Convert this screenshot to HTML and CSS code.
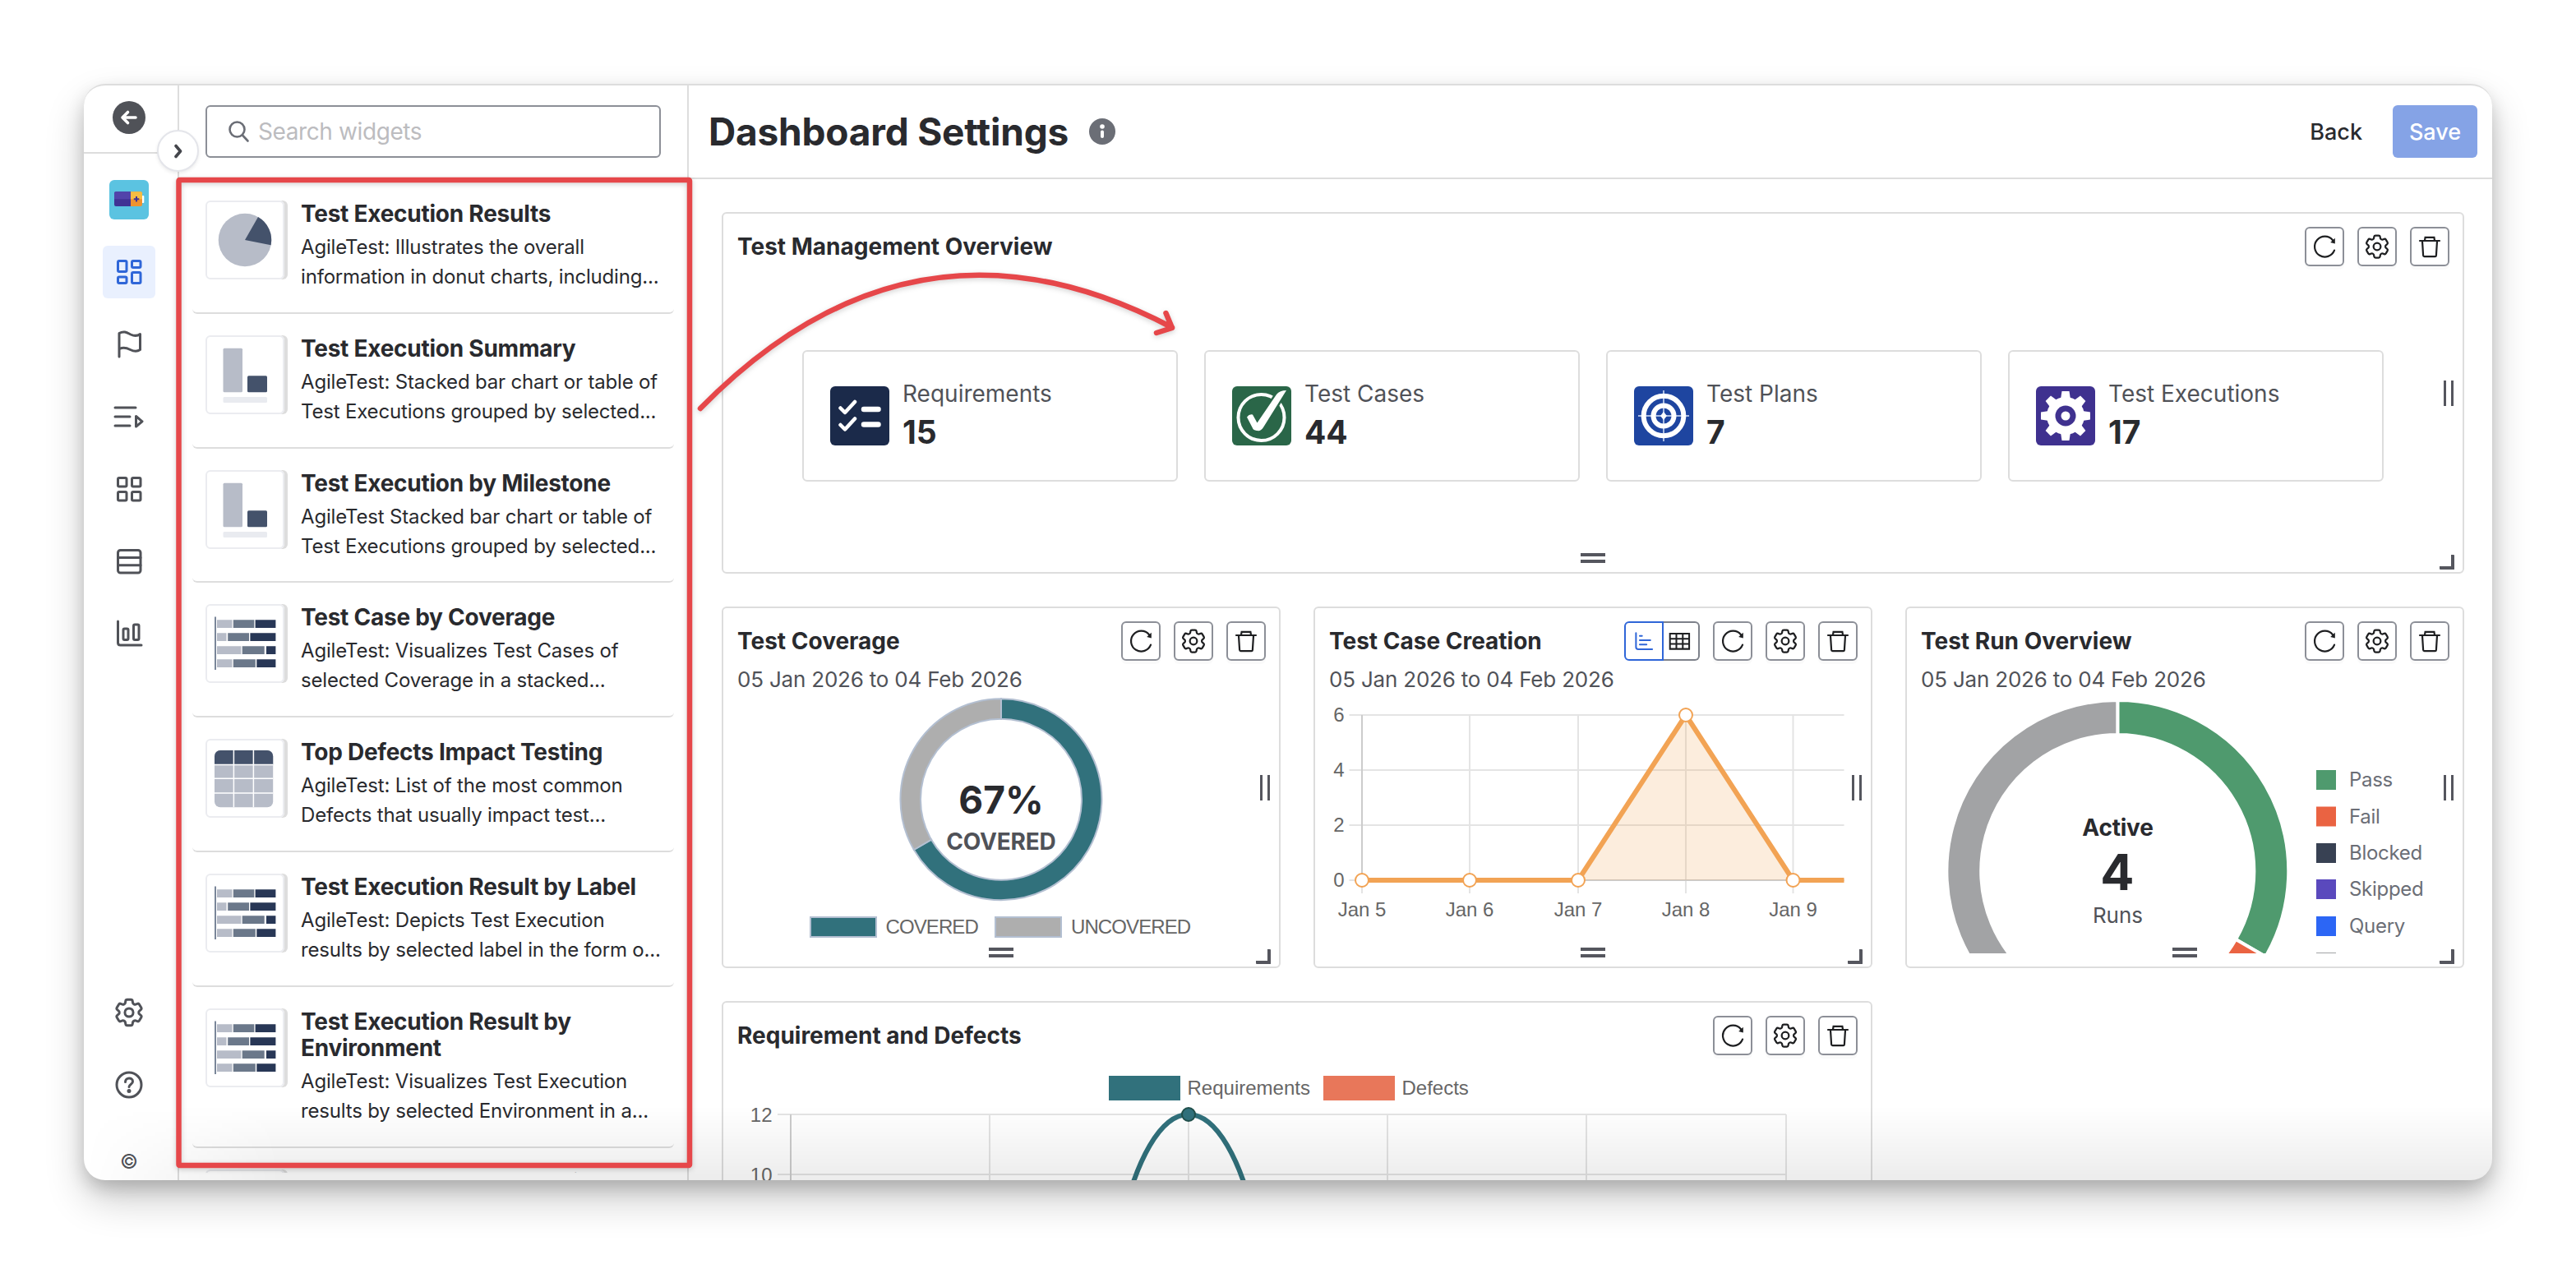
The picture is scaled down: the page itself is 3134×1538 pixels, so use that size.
FILE: index.html
```
<!DOCTYPE html>
<html lang="en">
<head>
  <title>Dashboard Settings</title>
  <meta charset="UTF-8">
  <meta name="viewport" content="width=device-width, initial-scale=1.0">
  <link rel="stylesheet" href="styles.css">
</head>
<body>
  <!-- Shared icons -->
  <svg class="sprite" width="0" height="0">
    <symbol id="gear" viewBox="0 0 24 24">
      <path d="M9.594 3.94c.09-.542.56-.94 1.11-.94h2.593c.55 0 1.02.398 1.11.94l.213 1.281c.063.374.313.686.645.87.074.04.147.083.22.127.325.196.72.257 1.075.124l1.217-.456a1.125 1.125 0 0 1 1.37.49l1.296 2.247a1.125 1.125 0 0 1-.26 1.431l-1.003.827c-.293.241-.438.613-.43.992a7.723 7.723 0 0 1 0 .255c-.008.378.137.75.43.991l1.004.827c.424.35.534.955.26 1.43l-1.298 2.247a1.125 1.125 0 0 1-1.369.491l-1.217-.456c-.355-.133-.75-.072-1.076.124a6.47 6.47 0 0 1-.22.128c-.331.183-.581.495-.644.869l-.213 1.281c-.09.543-.56.94-1.11.94h-2.594c-.55 0-1.019-.398-1.11-.94l-.213-1.281c-.062-.374-.312-.686-.644-.87a6.52 6.52 0 0 1-.22-.127c-.325-.196-.72-.257-1.076-.124l-1.217.456a1.125 1.125 0 0 1-1.369-.49l-1.297-2.247a1.125 1.125 0 0 1 .26-1.431l1.004-.827c.292-.24.437-.613.43-.991a6.932 6.932 0 0 1 0-.255c.007-.38-.138-.751-.43-.992l-1.004-.827a1.125 1.125 0 0 1-.26-1.43l1.297-2.247a1.125 1.125 0 0 1 1.37-.491l1.216.456c.356.133.751.072 1.076-.124.072-.044.146-.086.22-.128.332-.183.582-.495.644-.869l.214-1.28Z"/>
      <circle cx="12" cy="12" r="2.9"/>
    </symbol>
    <symbol id="refresh" viewBox="2 2 44 44">
      <path d="M36 28.6A12.4 12.4 0 1 1 34 16.2"/>
      <path class="solid" d="M36.8 13.8v6.6l-5.6-1.4z"/>
    </symbol>
    <symbol id="trash" viewBox="2 2 44 44">
      <path d="M12 17h24M18 16.500l.6-3.700h10.800l.6 3.700M15 17.500l1.100 17.300q.1 1.400 1.400 1.400h13q1.300 0 1.400-1.400l1.100-17.300"/>
    </symbol>
    <symbol id="thumb-pie" viewBox="0 0 92 92">
      <circle cx="46" cy="46" r="32.300" fill="#b7bcc8"/>
      <path d="M46 46 62 18A32.300 32.300 0 0 1 77.600 52.300z" fill="#44526b"/>
    </symbol>
    <symbol id="thumb-bar" viewBox="0 0 92 92">
      <rect x="19.500" y="13.700" width="23.500" height="53.500" rx="1.500" fill="#b7bcc8"/>
      <rect x="49" y="47.300" width="24" height="20" rx="1.500" fill="#44526b"/>
      <rect x="19.500" y="73" width="53.500" height="7" rx="1.500" fill="#e9ebf0"/>
    </symbol>
    <symbol id="thumb-stacked" viewBox="2 2 92 92">
      <path d="M12 15.500v64.500" stroke="#7a8699" stroke-width="2"/>
      <path fill="#b7bcc8" d="M14 19.200h18.500v9.800H14zM14 35.200h11.500V45H14zM14 51.200h29.400V61H14zM14 67.200h18.500V77H14z"/>
      <path fill="#6b788a" d="M33.800 19.200h25.500v9.800H33.800zM27.200 35.200H53V45H27.200zM44.700 51.200h27V61h-27zM33.800 67.200h27V77h-27z"/>
      <path fill="#283756" d="M60.600 19.200h24.800v9.800H60.600zM54.400 35.200h31V45h-31zM74 51.200h11.400V61H74zM62.300 67.200h23.100V77H62.300z"/>
    </symbol>
    <symbol id="thumb-table" viewBox="2 2 92 92">
      <clipPath id="tbl"><rect x="11" y="14" width="71.200" height="69.300" rx="7"/></clipPath>
      <g clip-path="url(#tbl)">
        <rect x="11" y="14" width="72" height="70" fill="#b7bcc8"/>
        <rect x="11" y="14" width="72" height="17" fill="#44526b"/>
        <path d="M34.400 14v70M58.400 14v70M11 31.500h72M11 48.300h72M11 66h72" stroke="#fff" stroke-width="1.500"/>
      </g>
    </symbol>
  </svg>

  <div class="window">
    <nav class="sidebar">
      <div class="sidebar-head">
        <svg width="40" height="40" viewBox="0 0 40 40">
          <circle cx="20" cy="20" r="20" fill="#505258"/>
          <path d="M28 20H12.500M18.500 13.500 12 20l6.500 6.500" fill="none" stroke="#fff" stroke-width="3.600" stroke-linecap="round" stroke-linejoin="round"/>
        </svg>
      </div>
      <div class="nav-list">
        <div class="nav-item">
          <svg width="48" height="48" viewBox="0 0 48 48">
            <rect width="48" height="48" rx="6" fill="#5bc3e1"/>
            <rect x="38" y="19" width="4.300" height="9" rx="1" fill="#fff"/>
            <path d="M8 14.300h18V32H8q-2 0-2-2V16.300q0-2 2-2z" fill="#403294"/>
            <path d="M8 14.300h18v8.900H6v-6.900q0-2 2-2z" fill="#5243aa"/>
            <path d="M26 14.300h12q2 0 2 2V30q0 2-2 2H26z" fill="#f0932f"/>
            <path d="M26 14.300h12q2 0 2 2v6.900H26z" fill="#f6bd43"/>
            <path d="M33 20v6.500M29.800 23.200h6.500" stroke="#403294" stroke-width="2"/>
          </svg>
        </div>
        <div class="nav-item active">
          <svg class="nav-icon" viewBox="0 0 64 64">
            <rect x="18.500" y="18.500" width="10.500" height="13" rx="1.500"/>
            <rect x="35.500" y="18.500" width="10.500" height="8" rx="1.500"/>
            <rect x="18.500" y="38" width="10.500" height="7.500" rx="1.500"/>
            <rect x="35.500" y="32.500" width="10.500" height="13" rx="1.500"/>
          </svg>
        </div>
        <div class="nav-item">
          <svg class="nav-icon" viewBox="0 0 64 64"><path d="M20 47V18.500c6-3.500 10-.5 14 1.500 4 1.800 8 2 11.500-.5v19c-3.500 2.500-8 2-12 0-4-2-8-3.500-13-1"/></svg>
        </div>
        <div class="nav-item">
          <svg class="nav-icon" viewBox="0 0 64 64"><path d="M15 21h25M15 32h18M15 43h18M40.500 31.500v12.500l7.500-6.200z"/></svg>
        </div>
        <div class="nav-item">
          <svg class="nav-icon" viewBox="0 0 64 64">
            <rect x="18.500" y="18.500" width="10.500" height="10.500" rx="1.500"/>
            <rect x="35.500" y="18.500" width="10.500" height="10.500" rx="1.500"/>
            <rect x="18.500" y="35.500" width="10.500" height="10.500" rx="1.500"/>
            <rect x="35.500" y="35.500" width="10.500" height="10.500" rx="1.500"/>
          </svg>
        </div>
        <div class="nav-item">
          <svg class="nav-icon" viewBox="0 0 64 64"><rect x="18.500" y="18.500" width="27.500" height="27.500" rx="3"/><path d="M18.500 27.500H46M18.500 36.800H46"/></svg>
        </div>
        <div class="nav-item">
          <svg class="nav-icon" viewBox="0 0 64 64"><path d="M18.500 17v26q0 3 3 3H47"/><rect x="25" y="26" width="6" height="13.500" rx="1.500"/><rect x="37.500" y="21" width="6.500" height="18.500" rx="1.500"/></svg>
        </div>
      </div>
      <div class="nav-foot">
        <div class="nav-item"><svg class="nav-gear"><use href="#gear"/></svg></div>
        <div class="nav-item">
          <svg class="nav-icon" viewBox="0 0 64 64"><circle cx="32" cy="32" r="15"/><path d="M27.500 28.500c0-6 9-6 9-.5 0 3.500-4.500 3.500-4.500 6.500"/><circle class="dot" cx="32" cy="39.500" r="1"/></svg>
        </div>
        <div class="copyright">©</div>
      </div>
    </nav>

    <aside class="widgets">
      <div class="search-wrap">
        <div class="search">
          <svg width="26" height="28" viewBox="0 0 26 28"><circle cx="10.500" cy="11.500" r="9" /><path d="M17 18.500l6.500 7"/></svg>
          <span>Search widgets</span>
        </div>
      </div>
      <div class="widget-list">
        <div class="widget">
          <div class="thumb"><svg><use href="#thumb-pie"/></svg></div>
          <div>
            <h3>Test Execution Results</h3>
            <p>AgileTest: Illustrates the overall<br>information in donut charts, including...</p>
          </div>
        </div>
        <div class="widget">
          <div class="thumb"><svg><use href="#thumb-bar"/></svg></div>
          <div>
            <h3>Test Execution Summary</h3>
            <p>AgileTest: Stacked bar chart or table of<br>Test Executions grouped by selected...</p>
          </div>
        </div>
        <div class="widget">
          <div class="thumb"><svg><use href="#thumb-bar"/></svg></div>
          <div>
            <h3>Test Execution by Milestone</h3>
            <p>AgileTest Stacked bar chart or table of<br>Test Executions grouped by selected...</p>
          </div>
        </div>
        <div class="widget">
          <div class="thumb"><svg><use href="#thumb-stacked"/></svg></div>
          <div>
            <h3>Test Case by Coverage</h3>
            <p>AgileTest: Visualizes Test Cases of<br>selected Coverage in a stacked...</p>
          </div>
        </div>
        <div class="widget">
          <div class="thumb"><svg><use href="#thumb-table"/></svg></div>
          <div>
            <h3>Top Defects Impact Testing</h3>
            <p>AgileTest: List of the most common<br>Defects that usually impact test...</p>
          </div>
        </div>
        <div class="widget">
          <div class="thumb"><svg><use href="#thumb-stacked"/></svg></div>
          <div>
            <h3>Test Execution Result by Label</h3>
            <p>AgileTest: Depicts Test Execution<br>results by selected label in the form o...</p>
          </div>
        </div>
        <div class="widget">
          <div class="thumb"><svg><use href="#thumb-stacked"/></svg></div>
          <div>
            <h3>Test Execution Result by<br>Environment</h3>
            <p>AgileTest: Visualizes Test Execution<br>results by selected Environment in a...</p>
          </div>
        </div>
        <div class="widget">
          <div class="thumb"></div>
          <div><h3>Test Management Overview</h3></div>
        </div>
      </div>
    </aside>

    <main class="main">
      <header class="header">
        <h1>Dashboard Settings</h1>
        <svg width="32" height="32" viewBox="0 0 32 32"><circle cx="16" cy="16" r="16" fill="#6b6e76"/><circle cx="16" cy="10" r="2.800" fill="#fff"/><path d="M16 16.500v5.500" stroke="#fff" stroke-width="4" stroke-linecap="round"/></svg>
        <span class="back">Back</span>
        <button class="save">Save</button>
      </header>

      <div class="board">
        <section class="card wide">
          <div class="card-head">
            <h2>Test Management Overview</h2>
            <div class="tools">
              <button><svg><use href="#refresh"/></svg></button>
              <button><svg class="cog"><use href="#gear"/></svg></button>
              <button><svg><use href="#trash"/></svg></button>
            </div>
          </div>
          <div class="stats">
            <div class="stat">
              <svg width="72" height="72" viewBox="0 0 72 72">
                <rect width="72" height="72" rx="6" fill="#1b2a4a"/>
                <g fill="none" stroke="#fff" stroke-linecap="round" stroke-linejoin="round">
                  <path d="M12.500 26.500l5.500 5.500L30 19M12.500 47l5.500 5.500L30 39.500" stroke-width="4.500"/>
                  <path d="M41 28h17.500M41 46.500h17.500" stroke-width="6.500"/>
                </g>
              </svg>
              <div><span>Requirements</span><b>15</b></div>
            </div>
            <div class="stat">
              <svg width="72" height="72" viewBox="0 0 72 72">
                <rect width="72" height="72" rx="6" fill="#2a6648"/>
                <circle cx="35.500" cy="38" r="28" fill="none" stroke="#fff" stroke-width="4"/>
                <path d="M18 37.500q3-4 7-3l5.500 10L54 10q4-5 12-5L38 50q-3 5-7.500 4-4.500.5-6-4z" fill="#fff" stroke="#2a6648" stroke-width="5" paint-order="stroke"/>
              </svg>
              <div><span>Test Cases</span><b>44</b></div>
            </div>
            <div class="stat">
              <svg width="72" height="72" viewBox="0 0 72 72">
                <rect width="72" height="72" rx="6" fill="#1e45a0"/>
                <path d="M36 5v62M5 36h62" stroke="#a9bce3" stroke-width="2"/>
                <g fill="none" stroke="#fff">
                  <circle cx="36" cy="36" r="24.300" stroke-width="6"/>
                  <circle cx="36" cy="36" r="12.500" stroke-width="6"/>
                </g>
                <path d="M36 31l4 5-4 5-4-5z" fill="#fff"/>
              </svg>
              <div><span>Test Plans</span><b>7</b></div>
            </div>
            <div class="stat">
              <svg width="72" height="72" viewBox="0 0 72 72">
                <rect width="72" height="72" rx="6" fill="#3f318f"/>
                <g fill="#fff">
                  <circle cx="36" cy="36" r="23"/>
                  <path id="tooth" d="M30 16l1.500-10h9L42 16v40l-1.500 10h-9L30 56z"/>
                  <use href="#tooth" transform="rotate(45 36 36)"/>
                  <use href="#tooth" transform="rotate(90 36 36)"/>
                  <use href="#tooth" transform="rotate(135 36 36)"/>
                </g>
                <circle cx="36" cy="36" r="12.500" fill="#3f318f"/>
                <circle cx="36" cy="36" r="5.500" fill="#fff"/>
              </svg>
              <div><span>Test Executions</span><b>17</b></div>
            </div>
          </div>
          <i class="grip-right"></i><i class="grip-bottom"></i><i class="grip-corner"></i>
        </section>

        <section class="card">
          <div class="card-head">
            <h2>Test Coverage</h2>
            <div class="tools">
              <button><svg><use href="#refresh"/></svg></button>
              <button><svg class="cog"><use href="#gear"/></svg></button>
              <button><svg><use href="#trash"/></svg></button>
            </div>
          </div>
          <p class="range">05 Jan 2026 to 04 Feb 2026</p>
          <svg class="chart" width="644" height="315" viewBox="0 0 644 315">
            <g stroke="#b3bfd1" stroke-width="2">
              <path fill="#31717c" d="M322 5.200A122.500 122.500 0 1 1 215.900 189L237.100 176.700A98 98 0 1 0 322 29.700Z"/>
              <path fill="#aeaeae" d="M215.900 189A122.500 122.500 0 0 1 322 5.200V29.700A98 98 0 0 0 237.100 176.700Z"/>
              <rect x="90" y="271" width="80" height="24" fill="#31717c"/>
              <rect x="315" y="271" width="80" height="24" fill="#aeaeae"/>
            </g>
            <text class="percent" x="322" y="144.500">67%</text>
            <text class="covered" x="322" y="189">COVERED</text>
            <text class="upper" x="181.500" y="290.500">COVERED</text>
            <text class="upper" x="407" y="290.500">UNCOVERED</text>
          </svg>
          <i class="grip-right"></i><i class="grip-bottom"></i><i class="grip-corner"></i>
        </section>

        <section class="card">
          <div class="card-head">
            <h2>Test Case Creation</h2>
            <div class="tools">
              <div class="toggle">
                <span class="on"><svg viewBox="0 0 48 48"><path d="M13.500 13.500V32q0 3 3 3H35M18.500 17.200h3M18.500 23h14M18.500 28.600h9"/></svg></span>
                <span><svg viewBox="0 0 44 48"><path d="M7.500 14.200h25.500v20.300H7.500zM7.500 21h25.500M7.500 27.800h25.500M16 14.200v20.300M24.500 14.200v20.300"/></svg></span>
              </div>
              <button><svg><use href="#refresh"/></svg></button>
              <button><svg class="cog"><use href="#gear"/></svg></button>
              <button><svg><use href="#trash"/></svg></button>
            </div>
          </div>
          <p class="range">05 Jan 2026 to 04 Feb 2026</p>
          <svg class="chart" width="644" height="315" viewBox="0 0 644 315">
            <path class="grid" d="M25.500 25h602M25.500 92h602M25.500 159h602M25.500 226h602M172 25v217M304 25v217M435 25v217M565.500 25v217M41 226v16"/>
            <path class="axis" d="M41 25v201M41 226h586.500"/>
            <path d="M304 226L435 25l130.500 201z" fill="#f2a354" fill-opacity=".2"/>
            <path d="M41 226h263L435 25l130.500 201h62" fill="none" stroke="#f2a354" stroke-width="6" stroke-linejoin="round"/>
            <g fill="#fff" stroke="#f2a354" stroke-width="2">
              <circle cx="41" cy="226" r="8"/><circle cx="172" cy="226" r="8"/><circle cx="304" cy="226" r="8"/><circle cx="435" cy="25" r="8"/><circle cx="565.500" cy="226" r="8"/>
            </g>
            <g class="ticks-y">
              <text x="19.500" y="33">6</text><text x="19.500" y="100">4</text><text x="19.500" y="167">2</text><text x="19.500" y="234">0</text>
            </g>
            <g class="ticks-x">
              <text x="41" y="270">Jan 5</text><text x="172" y="270">Jan 6</text><text x="304" y="270">Jan 7</text><text x="435" y="270">Jan 8</text><text x="565.500" y="270">Jan 9</text>
            </g>
          </svg>
          <i class="grip-right"></i><i class="grip-bottom"></i><i class="grip-corner"></i>
        </section>

        <section class="card">
          <div class="card-head">
            <h2>Test Run Overview</h2>
            <div class="tools">
              <button><svg><use href="#refresh"/></svg></button>
              <button><svg class="cog"><use href="#gear"/></svg></button>
              <button><svg><use href="#trash"/></svg></button>
            </div>
          </div>
          <p class="range">05 Jan 2026 to 04 Feb 2026</p>
          <svg class="chart" width="644" height="315" viewBox="0 0 644 315">
            <g stroke="#fff" stroke-width="4">
              <path fill="#4f9a6e" d="M240.300 7A208 208 0 0 1 420.400 319L384.100 298A166 166 0 0 0 240.300 49Z"/>
              <path fill="#ea6342" d="M420.400 319A208 208 0 0 1 344.300 395.100L323.300 358.800A166 166 0 0 0 384.100 298Z"/>
              <path fill="#a2a3a5" d="M136.300 395.100A208 208 0 0 1 240.300 7V49A166 166 0 0 0 157.300 358.800Z"/>
            </g>
            <text class="active-label" x="240.500" y="172">Active</text>
            <text class="active-count" x="240" y="237.500">4</text>
            <text class="active-unit" x="240.500" y="277.500">Runs</text>
            <g class="legend">
              <rect x="482" y="92" width="24" height="24" fill="#4f9a6e"/><text x="522" y="112">Pass</text>
              <rect x="482" y="136.500" width="24" height="24" fill="#ea6342"/><text x="522" y="156.500">Fail</text>
              <rect x="482" y="181" width="24" height="24" fill="#384153"/><text x="522" y="201">Blocked</text>
              <rect x="482" y="225" width="24" height="24" fill="#5a49bd"/><text x="522" y="245">Skipped</text>
              <rect x="482" y="270" width="24" height="24" fill="#2c66f5"/><text x="522" y="290">Query</text>
              <rect x="482" y="314" width="24" height="24" fill="#a2a3a5"/>
            </g>
          </svg>
          <i class="grip-right"></i><i class="grip-bottom"></i><i class="grip-corner"></i>
        </section>

        <section class="card double">
          <div class="card-head">
            <h2>Requirement and Defects</h2>
            <div class="tools">
              <button><svg><use href="#refresh"/></svg></button>
              <button><svg class="cog"><use href="#gear"/></svg></button>
              <button><svg><use href="#trash"/></svg></button>
            </div>
          </div>
          <svg class="chart" width="1364" height="300" viewBox="0 0 1364 300">
            <rect x="453" y="25" width="87" height="30" fill="#31717c"/>
            <rect x="714" y="25" width="87" height="30" fill="#e8775a"/>
            <text x="548.500" y="48">Requirements</text>
            <text x="809.500" y="48">Defects</text>
            <path class="grid" d="M50 72h1227M50 145h1227M308 72v228M550 72v228M792 72v228M1034 72v228M1277 72v228"/>
            <path class="axis" d="M66 72v228"/>
            <path d="M470 200C486 130 515 72 550 72s64 58 80 128" fill="none" stroke="#31717c" stroke-width="6"/>
            <circle cx="550" cy="72" r="8" fill="#31717c" stroke="#21504c" stroke-width="2"/>
            <g class="ticks-y"><text x="43.500" y="80.500">12</text><text x="43.500" y="153.500">10</text></g>
          </svg>
        </section>
      </div>
    </main>
    <div class="fade"></div>
  </div>

  <span class="expand"><svg width="12" height="18" viewBox="0 0 12 18"><path d="M3 2.500L8.500 9 3 15.500"/></svg></span>

  <!-- Annotation over the page -->
  <svg class="annotation" width="1300" height="1300" viewBox="200 200 1300 1300">
    <rect x="217.500" y="219" width="621.500" height="1199" rx="1"/>
    <path d="M852 497Q1111 233 1426 398.500M1418.500 381l7.500 18-19 6"/>
  </svg>
</body>
</html>
```
FILE: styles.css
```
* {
  box-sizing: border-box;
}
body {
  margin: 0;
  width: 3134px;
  height: 1538px;
  padding: 102px;
  overflow: hidden;
  position: relative;
  background: #fff;
  color: #292a2e;
  font-family: Inter, "Liberation Sans", sans-serif;
}
h1, h2, h3, p {
  margin: 0;
}
.sprite {
  position: absolute;
}
.window {
  position: relative;
  display: flex;
  width: 2930px;
  height: 1334px;
  border-top: 2px solid #ddd;
  border-radius: 26px;
  background: #fff;
  overflow: hidden;
  box-shadow: 0 10px 22px -2px rgba(0,0,0,0.2), 0 24px 48px rgba(0,0,0,0.2);
}

/* Left navigation */
.sidebar {
  flex: none;
  width: 116px;
  display: flex;
  flex-direction: column;
  border-right: 2px solid #ddd;
}
.sidebar-head {
  height: 83px;
  padding: 19px 4px 0 0;
  border-bottom: 2px solid #ddd;
  text-align: center;
}
.nav-list, .nav-foot {
  display: flex;
  flex-direction: column;
  align-items: center;
  gap: 24px;
  padding-right: 4px;
}
.nav-list {
  padding-top: 24px;
}
.nav-foot {
  margin-top: auto;
}
.nav-item {
  width: 64px;
  height: 64px;
  border-radius: 6px;
  display: flex;
  align-items: center;
  justify-content: center;
  color: #505258;
}
.nav-item.active {
  background: #e9f0fe;
  color: #2f66d8;
}
.nav-icon {
  width: 64px;
  height: 64px;
  fill: none;
  stroke: currentColor;
  stroke-width: 3;
  stroke-linecap: round;
  stroke-linejoin: round;
}
.nav-gear {
  width: 42px;
  height: 42px;
  fill: none;
  stroke: currentColor;
  stroke-width: 1.7;
}
.dot {
  fill: currentColor;
}
.copyright {
  height: 46px;
  margin-top: 14px;
  line-height: 48px;
  font-size: 24px;
  color: #505258;
}
.expand {
  position: absolute;
  left: 191px;
  top: 158px;
  width: 51px;
  height: 51px;
  border: 2px solid #e4e5ea;
  border-radius: 50%;
  background: #fff;
  box-shadow: 0 2px 4px rgba(0,0,0,0.08);
  display: flex;
  align-items: center;
  justify-content: center;
}
.expand svg {
  fill: none;
  stroke: #44464c;
  stroke-width: 3.6;
  stroke-linecap: round;
  stroke-linejoin: round;
}

/* Widget picker */
.widgets {
  flex: none;
  width: 620px;
  border-right: 2px solid #ddd;
}
.search-wrap {
  height: 114px;
  padding: 24px 32px;
}
.search {
  width: 554px;
  height: 64px;
  border: 2px solid #8c8f97;
  border-radius: 6px;
  display: flex;
  align-items: center;
  gap: 10px;
  padding-left: 26px;
  font-size: 28px;
  letter-spacing: -0.4px;
  color: #bcbcbf;
}
.search svg {
  fill: none;
  stroke: #6b6e76;
  stroke-width: 2.6;
  stroke-linecap: round;
}
.widget-list {
  height: 1209px;
  overflow: hidden;
  padding: 0 16px;
}
.widget {
  display: flex;
  gap: 17px;
  padding: 26px 16px 24.8px;
  border-bottom: 2px solid #ddd;
  border-radius: 6px;
}
.thumb {
  flex: none;
  width: 96px;
  height: 96px;
  margin-right: 3px;
  border: 2px solid #ebecf0;
  border-radius: 6px;
  box-shadow: 4px 0 0 #ddd;
}
.thumb svg {
  display: block;
  width: 92px;
  height: 92px;
}
.widget h3 {
  font-size: 28px;
  font-weight: 650;
  line-height: 32px;
  letter-spacing: -0.25px;
}
.widget p {
  margin-top: 7px;
  font-size: 24px;
  line-height: 36px;
  letter-spacing: -0.18px;
  white-space: nowrap;
}

/* Main area */
.main {
  flex: 1;
  min-width: 0;
}
.header {
  height: 114px;
  padding: 0 18px 0 24px;
  border-bottom: 2px solid #ddd;
  display: flex;
  align-items: center;
}
.header h1 {
  margin-right: 25px;
  font-size: 46px;
  font-weight: 700;
  letter-spacing: -0.2px;
}
.back {
  margin-left: auto;
  margin-right: 37px;
  font-size: 27px;
  font-weight: 500;
}
.save {
  width: 103px;
  height: 64px;
  padding: 0;
  border: none;
  border-radius: 6px;
  background: #85a3e6;
  color: #fff;
  font: 500 27px Inter, sans-serif;
}
.board {
  display: grid;
  grid-template-columns: repeat(3, 680px);
  grid-auto-rows: 440px;
  gap: 40px;
  padding: 40px;
}
.card {
  position: relative;
  padding: 16px;
  border: 2px solid #ddd;
  border-radius: 6px;
}
.wide {
  grid-column: span 3;
}
.double {
  grid-column: span 2;
}
.card-head {
  display: flex;
  align-items: center;
  justify-content: space-between;
  height: 48px;
}
.card-head h2 {
  padding-left: 1px;
  font-size: 28px;
  font-weight: 650;
}
.tools {
  display: flex;
  gap: 16px;
}
.tools button {
  width: 48px;
  height: 48px;
  padding: 0;
  border: 2px solid #8c8f97;
  border-radius: 6px;
  background: #fff;
  box-shadow: 0 4px 0 rgba(0,0,0,0.02);
  display: flex;
  align-items: center;
  justify-content: center;
}
.tools svg {
  width: 44px;
  height: 44px;
  fill: none;
  stroke: #1e1f21;
  stroke-width: 2.2;
  stroke-linecap: round;
}
.tools .cog {
  width: 36px;
  height: 36px;
  stroke-width: 1.5;
}
.solid {
  fill: #1e1f21;
  stroke: none;
}
.toggle {
  display: flex;
}
.toggle span {
  width: 44px;
  height: 48px;
  border: 2px solid #7d818a;
  border-left: none;
  border-radius: 0 6px 6px 0;
}
.toggle span.on {
  width: 48px;
  border: 2px solid #2f66d8;
  border-radius: 6px 0 0 6px;
}
.toggle svg {
  display: block;
  width: 100%;
  height: 44px;
}
.toggle .on svg {
  stroke: #2f66d8;
}
.range {
  margin-top: 5px;
  padding-left: 1px;
  font-size: 26px;
  line-height: 36px;
  letter-spacing: -0.2px;
  color: #505258;
}

/* Resize handles */
.grip-right, .grip-bottom, .grip-corner {
  position: absolute;
}
.grip-right {
  right: 11px;
  top: 203px;
  width: 12px;
  height: 31px;
  border: solid #55565e;
  border-width: 0 3px;
}
.grip-bottom {
  left: 50%;
  bottom: 11px;
  width: 30px;
  height: 12px;
  margin-left: -15px;
  border: solid #55565e;
  border-width: 4px 0;
}
.grip-corner {
  right: 10px;
  bottom: 3px;
  width: 18px;
  height: 18px;
  border: solid #55565e;
  border-width: 0 4px 4px 0;
  border-radius: 1px;
}

/* Stats */
.stats {
  display: grid;
  grid-template-columns: repeat(4, 1fr);
  gap: 32px;
  margin-top: 102px;
  padding: 0 80px;
}
.stat {
  display: flex;
  align-items: center;
  gap: 16px;
  height: 160px;
  padding-left: 32px;
  border: 2px solid #ddd;
  border-radius: 6px;
}
.stat span {
  display: block;
  font-size: 28px;
  line-height: 40px;
  color: #505258;
}
.stat b {
  display: block;
  font-size: 39px;
  font-weight: 650;
  line-height: 54px;
}

/* Charts */
.chart {
  display: block;
  overflow: hidden;
  font: 24px "Liberation Sans", sans-serif;
  fill: #666;
}
.grid, .axis {
  fill: none;
  stroke: #e4e4e4;
  stroke-width: 2;
}
.axis {
  stroke: #ccc;
}
.ticks-y {
  text-anchor: end;
}
.ticks-x {
  text-anchor: middle;
}
.upper {
  letter-spacing: -0.9px;
}
.percent, .covered, .active-label, .active-count, .active-unit {
  font-family: Inter, sans-serif;
  font-weight: 650;
  text-anchor: middle;
  fill: #292a2e;
}
.percent {
  font-size: 46px;
}
.covered {
  font-size: 28px;
  letter-spacing: -0.2px;
  fill: #505258;
}
.active-label {
  font-size: 28px;
  letter-spacing: -0.2px;
}
.active-count {
  font-size: 61px;
}
.active-unit {
  font-size: 26px;
  font-weight: 400;
  fill: #505258;
}
.legend {
  font-family: Inter, sans-serif;
  letter-spacing: -0.3px;
  fill: #6b6e76;
}
.fade {
  position: absolute;
  left: 0;
  right: 0;
  bottom: 0;
  height: 90px;
  background: linear-gradient(to top, rgba(0,0,0,0.075), rgba(0,0,0,0));
  mask-image: linear-gradient(to right, transparent, #000 240px);
  pointer-events: none;
}
.annotation {
  position: absolute;
  left: 200px;
  top: 200px;
  fill: none;
  stroke: #e6474a;
  stroke-width: 6.5;
  stroke-linecap: round;
  stroke-linejoin: round;
  filter: drop-shadow(0 2px 3px rgba(0,0,0,0.18));
}
```
